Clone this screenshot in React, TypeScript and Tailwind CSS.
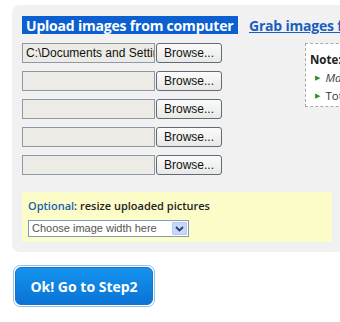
import React from "react";

function FileRow({ value }: { value?: string }) {
  return (
    <div className="flex h-[20px] items-stretch">
      <div className="w-[133px] shrink-0 border border-[#8d9aa6] bg-[#ecebe6] px-[3px] text-[12px] leading-[18px] text-[#111] overflow-hidden whitespace-nowrap" style={{ fontFamily: '"Liberation Sans", Arial, sans-serif' }}>
        {value ?? ""}
      </div>
      <div className="ml-[1px] flex w-[66px] shrink-0 items-center justify-center rounded-[3px] border border-[#5f6b76] bg-gradient-to-b from-[#fbfbfb] to-[#e8e8e6] text-[12px] text-[#111]" style={{ fontFamily: '"Liberation Sans", Arial, sans-serif' }}>
        Browse...
      </div>
    </div>
  );
}

export default function App() {
  return (
    <div className="relative h-[322px] w-[340px] overflow-hidden bg-white" style={{ fontFamily: '"Open Sans", "DejaVu Sans", sans-serif' }}>
      <div className="pl-[12px] pt-[5px]">
        <div className="w-[400px] rounded-l-[8px] bg-[#f1f1f1] pb-[10px] pl-[10px] pt-[11px]">
          <div className="flex h-[18px] items-center">
            <div className="flex h-[18px] w-[216px] shrink-0 items-center whitespace-nowrap bg-[#0b5fd0] pl-[4px] text-[14px] font-bold tracking-[-0.2px] text-white">
              Upload images from computer
            </div>
            <div className="ml-[11px] shrink-0 whitespace-nowrap text-[14px] font-bold tracking-[-0.2px] text-[#1a5fc0] underline">
              Grab images from web
            </div>
          </div>
          <div className="mt-[9px] flex">
            <div className="flex w-[283px] shrink-0 flex-col gap-[8px]">
              <FileRow value="C:\Documents and Settings\" />
              <FileRow />
              <FileRow />
              <FileRow />
              <FileRow />
            </div>
            <div className="h-[64px] w-[90px] shrink-0 border border-dashed border-[#a8a8a8] bg-white pl-[4px] pt-[7px] text-[11.5px] leading-[18px] text-[#222]">
              <div className="font-bold">Note:</div>
              <div className="flex items-center whitespace-nowrap pl-[5px] italic text-[#444]">
                <span className="mr-[5px] text-[7px] not-italic text-[#3a8a2a]">▶</span>Max 5 files
              </div>
              <div className="flex items-center whitespace-nowrap pl-[5px] text-[#333]">
                <span className="mr-[5px] text-[7px] text-[#3a8a2a]">▶</span>Total size
              </div>
            </div>
          </div>
          <div className="mt-[17px] h-[50px] w-[310px] bg-[#fcfcc9] pl-[6px] pt-[6px]">
            <div className="whitespace-nowrap text-[11px] font-semibold leading-[16px] text-[#222]">
              <span className="text-[#1a5fae]">Optional</span>: resize uploaded pictures
            </div>
            <div className="mt-[6px] flex h-[17px] w-[161px] items-stretch border border-[#7f9db9] bg-white">
              <div className="flex-1 overflow-hidden whitespace-nowrap pl-[3px] text-[11px] leading-[15px] text-[#555]" style={{ fontFamily: '"Liberation Sans", Arial, sans-serif' }}>
                Choose image width here
              </div>
              <div className="m-[1px] flex w-[15px] shrink-0 items-center justify-center rounded-[1px] border border-[#b5c8ee] bg-[#c6d7f7]">
                <svg width="9" height="6" viewBox="0 0 9 6">
                  <path d="M1 1 L4.5 4.5 L8 1" fill="none" stroke="#2b3f73" strokeWidth="1.8" />
                </svg>
              </div>
            </div>
          </div>
        </div>
      </div>
      <div className="ml-[13px] mt-[13px] h-[42px] w-[142px] rounded-[7px] border border-[#8cc4f0] bg-white p-[1px]">
        <div className="flex h-full w-full items-center justify-center rounded-[6px] border border-[#1d72c4] bg-gradient-to-b from-[#1592ee] to-[#0a74d6] text-[14px] font-bold text-white">
          Ok! Go to Step2
        </div>
      </div>
    </div>
  );
}
